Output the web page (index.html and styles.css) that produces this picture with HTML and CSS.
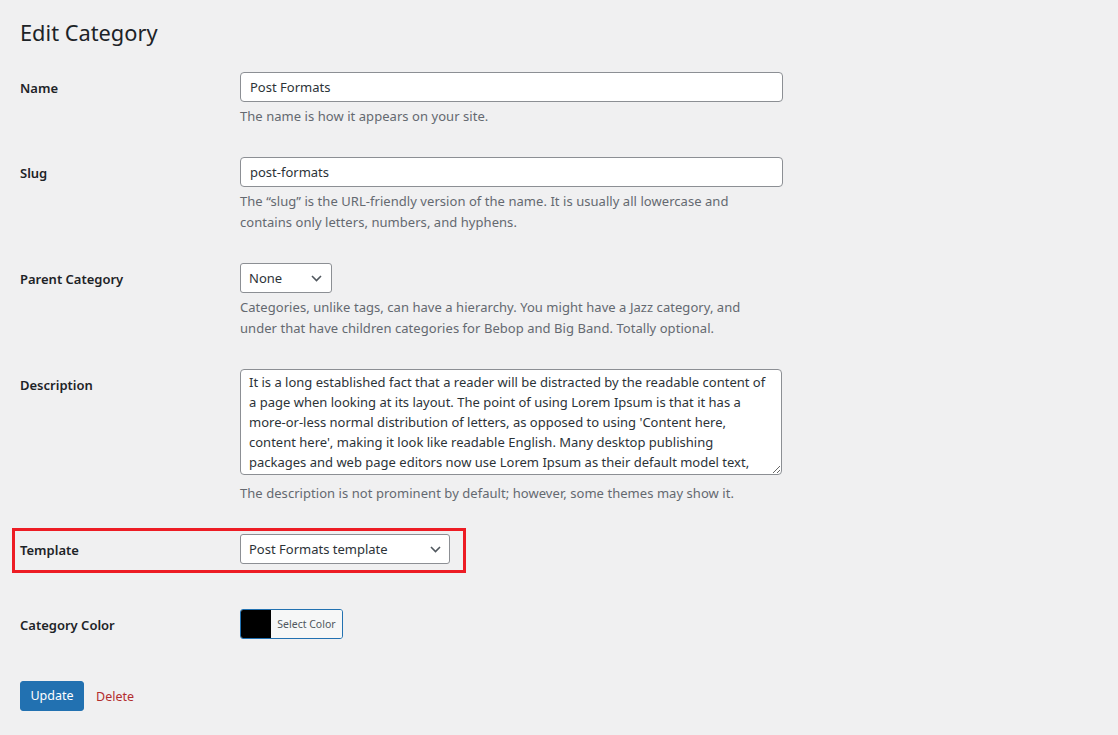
FILE: index.html
```html
<!DOCTYPE html>
<html lang="en">
<head>
<meta charset="utf-8">
<title>Edit Category</title>
<link rel="stylesheet" href="styles.css">
</head>
<body>
<div class="wrap">
  <h1 class="page-title">Edit Category</h1>
  <form class="form-table">
    <div class="row">
      <div class="th"><label for="name">Name</label></div>
      <div class="td">
        <input id="name" class="text-input" type="text" value="Post Formats">
        <p class="description">The name is how it appears on your site.</p>
      </div>
    </div>
    <div class="row">
      <div class="th"><label for="slug">Slug</label></div>
      <div class="td">
        <input id="slug" class="text-input" type="text" value="post-formats">
        <p class="description">The “slug” is the URL-friendly version of the name. It is usually all lowercase and<br>contains only letters, numbers, and hyphens.</p>
      </div>
    </div>
    <div class="row">
      <div class="th"><label for="parent">Parent Category</label></div>
      <div class="td">
        <span class="select-wrap select-small">
          <select id="parent" class="select"><option>None</option></select>
          <svg class="chevron" width="11" height="7" viewBox="0 0 11 7"><polyline points="1,1 5.5,5.5 10,1" fill="none" stroke="#50575e" stroke-width="1.6"/></svg>
        </span>
        <p class="description">Categories, unlike tags, can have a hierarchy. You might have a Jazz category, and<br>under that have children categories for Bebop and Big Band. Totally optional.</p>
      </div>
    </div>
    <div class="row">
      <div class="th"><label for="desc">Description</label></div>
      <div class="td">
        <textarea id="desc" class="textarea" rows="5">It is a long established fact that a reader will be distracted by the readable content of
a page when looking at its layout. The point of using Lorem Ipsum is that it has a
more-or-less normal distribution of letters, as opposed to using 'Content here,
content here', making it look like readable English. Many desktop publishing
packages and web page editors now use Lorem Ipsum as their default model text,
and a search for 'lorem ipsum' will uncover many web sites still in their infancy.</textarea>
        <p class="description">The description is not prominent by default; however, some themes may show it.</p>
      </div>
    </div>
    <div class="row row-template">
      <div class="th"><label for="template">Template</label></div>
      <div class="td">
        <span class="select-wrap select-wide">
          <select id="template" class="select"><option>Post Formats template</option></select>
          <svg class="chevron" width="11" height="7" viewBox="0 0 11 7"><polyline points="1,1 5.5,5.5 10,1" fill="none" stroke="#50575e" stroke-width="1.6"/></svg>
        </span>
      </div>
      <div class="highlight-box"></div>
    </div>
    <div class="row">
      <div class="th"><label>Category Color</label></div>
      <div class="td">
        <button type="button" class="color-result"><span class="swatch"></span><span class="color-text">Select Color</span></button>
      </div>
    </div>
  </form>
  <div class="submit">
    <button type="button" class="button-primary">Update</button>
    <a href="#" class="delete">Delete</a>
  </div>
</div>
</body>
</html>
```

FILE: styles.css
```css
html, body {
  margin: 0;
  padding: 0;
  background: #f0f0f1;
}

body {
  font-family: "Noto Sans", "Open Sans", sans-serif;
  color: #1d2327;
  font-size: 13px;
}

.wrap {
  padding: 0 20px;
}

.page-title {
  margin: 18px 0 9px;
  font-size: 21.8px;
  font-weight: 400;
  line-height: 30px;
  color: #1d2327;
}

.form-table {
  display: flex;
  flex-direction: column;
}

.row {
  display: grid;
  grid-template-columns: 220px 543px;
  position: relative;
}

.th {
  padding: 15px 0;
}

.th label {
  display: block;
  padding-top: 1px;
  font-size: 13px;
  font-weight: 600;
  line-height: 30px;
  color: #1d2327;
}

.td {
  padding: 15px 0;
}

.row-template .td {
  padding-bottom: 30px;
}

.text-input {
  display: block;
  box-sizing: border-box;
  width: 543px;
  height: 30px;
  margin: 0;
  padding: 0 9px;
  border: 1px solid #8c8f94;
  border-radius: 4px;
  background: #fff;
  font-family: inherit;
  font-size: 13px;
  color: #2c3338;
  outline: none;
}

.description {
  margin: 4px 0 0;
  font-size: 13px;
  letter-spacing: 0.05px;
  line-height: 21px;
  color: #646970;
}

.select-wrap {
  position: relative;
  display: block;
  height: 30px;
}

.select-small { width: 92px; }
.select-wide { width: 210px; }

.select {
  -webkit-appearance: none;
  appearance: none;
  box-sizing: border-box;
  width: 100%;
  height: 30px;
  margin: 0;
  padding: 0 24px 0 8px;
  border: 1px solid #8c8f94;
  border-radius: 3px;
  background: #fff;
  font-family: inherit;
  font-size: 13px;
  color: #2c3338;
  outline: none;
}

.chevron {
  position: absolute;
  top: 12px;
  right: 10px;
  pointer-events: none;
}

.select-wide .chevron { right: 9px; }

.textarea {
  display: block;
  box-sizing: border-box;
  width: 542px;
  height: 106px;
  margin: 0 0 8px;
  padding: 2px 8px;
  border: 1px solid #8c8f94;
  border-radius: 4px;
  background: #fff;
  font-family: inherit;
  font-size: 13px;
  line-height: 20px;
  color: #2c3338;
  overflow: hidden;
  white-space: pre;
  resize: both;
  outline: none;
}

.highlight-box {
  position: absolute;
  left: -8px;
  top: 9px;
  width: 454px;
  height: 45px;
  box-sizing: border-box;
  border: 3px solid #ed1c24;
  pointer-events: none;
}

.color-result {
  display: flex;
  align-items: stretch;
  box-sizing: border-box;
  width: 103px;
  height: 30px;
  margin: 0;
  padding: 0;
  border: 1px solid #2271b1;
  border-radius: 3px;
  background: #f6f7f7;
  overflow: hidden;
  cursor: pointer;
}

.swatch {
  width: 30px;
  background: #000;
}

.color-text {
  flex: 1;
  padding: 0 5px;
  font-family: "Noto Sans", "Open Sans", sans-serif;
  font-size: 10.5px;
  line-height: 28px;
  color: #50575e;
  background: #f6f7f7;
  text-align: center;
}

.submit {
  display: flex;
  align-items: center;
  gap: 12px;
  margin-top: 26px;
}

.button-primary {
  box-sizing: border-box;
  width: 64px;
  height: 30px;
  padding: 0;
  border: 1px solid #2271b1;
  border-radius: 3px;
  background: #2271b1;
  color: #fff;
  font-family: inherit;
  font-size: 12.5px;
  line-height: 28px;
  cursor: pointer;
}

.delete {
  color: #b32d2e;
  font-size: 12.5px;
  text-decoration: none;
}
```
